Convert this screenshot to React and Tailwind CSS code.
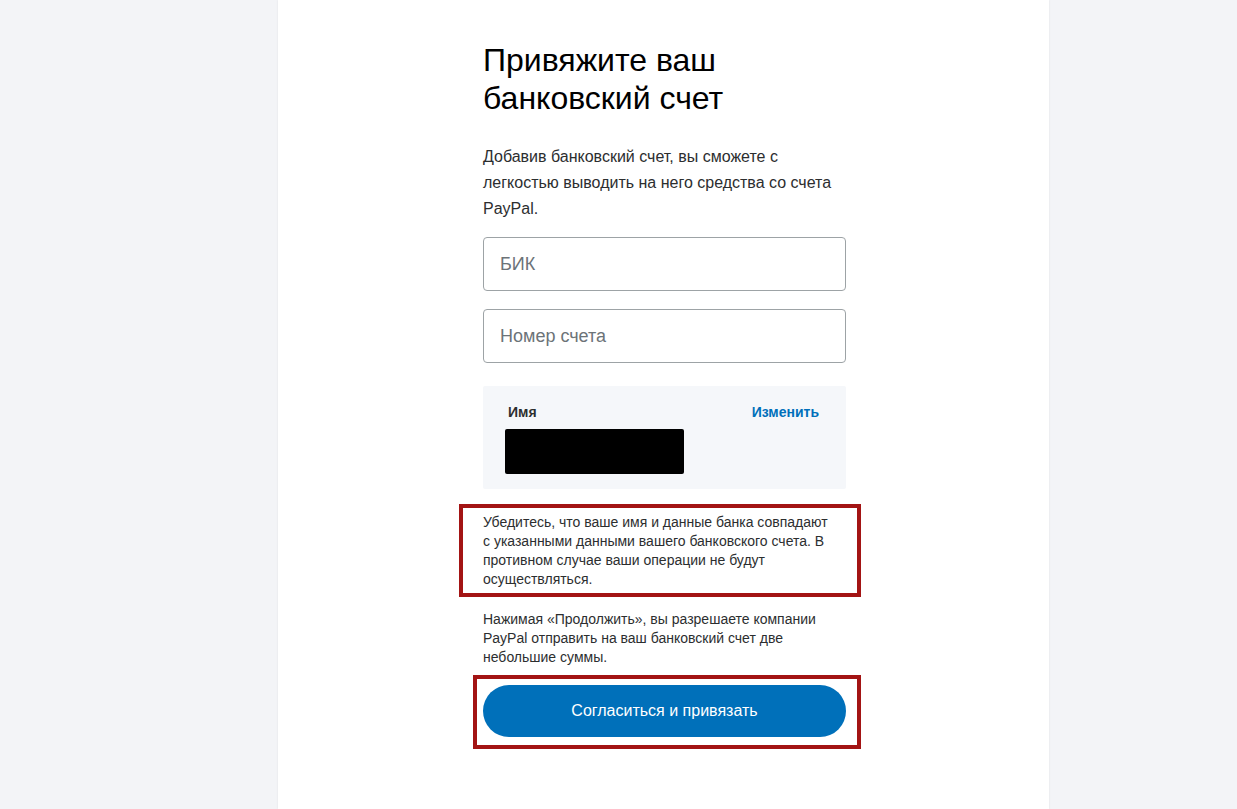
import React from "react";

const App = () => {
  return (
    <div
      className="min-h-screen bg-[#f3f4f7] flex justify-start"
      style={{ fontFamily: '"Liberation Sans", Arial, sans-serif' }}
    >
      <div className="w-[771px] ml-[278px] bg-white shadow-[0_0_2px_rgba(0,0,0,0.08)] flex justify-center">
        <div className="w-[363px] ml-[2px] pt-[41px] pb-10 text-[#2c2e2f]">
          <h1 className="text-[32px] leading-[38px] font-normal text-black">
            Привяжите ваш
            <br />
            банковский счет
          </h1>

          <p className="mt-[27px] text-[16px] leading-[26px]">
            Добавив банковский счет, вы сможете с легкостью выводить на него
            средства со счета PayPal.
          </p>

          <div className="mt-[15px] flex flex-col gap-[18px]">
            <input
              className="h-[54px] w-full border border-[#9da3a6] rounded-[4px] px-[16px] text-[18px] placeholder-[#6c7378] outline-none"
              placeholder="БИК"
            />
            <input
              className="h-[54px] w-full border border-[#9da3a6] rounded-[4px] px-[16px] text-[18px] placeholder-[#6c7378] outline-none"
              placeholder="Номер счета"
            />
          </div>

          <div className="mt-[23px] h-[103px] bg-[#f5f7fa] rounded-[2px] pl-[22px] pr-[27px] pt-[17px]">
            <div className="flex justify-between items-center">
              <span className="text-[14px] leading-[18px] font-bold pl-[3px]">Имя</span>
              <button className="text-[14px] leading-[18px] font-bold text-[#0070ba]">
                Изменить
              </button>
            </div>
            <div className="mt-[8px] w-[179px] h-[45px] bg-black rounded-[2px]" />
          </div>

          <div className="mt-[15px] ml-[-24px] mr-[-15px] border-4 border-[#a31414] pl-[20px] pr-[24px] pt-[5px] pb-[4px]">
            <p className="text-[14px] leading-[19px]">
              Убедитесь, что ваше имя и данные банка совпадают с указанными
              данными вашего банковского счета. В противном случае ваши
              операции не будут осуществляться.
            </p>
          </div>

          <p className="mt-[13px] text-[14px] leading-[19px] pr-[10px]">
            Нажимая «Продолжить», вы разрешаете компании PayPal отправить на
            ваш банковский счет две небольшие суммы.
          </p>

          <div className="mt-[8px] ml-[-10px] mr-[-15px] border-4 border-[#a31414] pl-[6px] pr-[11px] pt-[6px] pb-[8px]">
            <button className="w-full h-[52px] rounded-full bg-[#0070ba] text-white text-[16px]">
              Согласиться и привязать
            </button>
          </div>
        </div>
      </div>
    </div>
  );
};

export default App;
